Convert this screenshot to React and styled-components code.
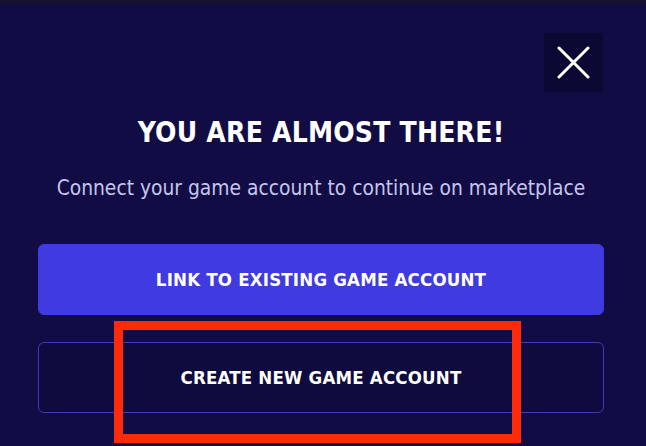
import React from 'react';
import styled, { createGlobalStyle } from 'styled-components';

const GlobalStyle = createGlobalStyle`
  html, body {
    margin: 0;
    padding: 0;
    background: #16112f;
  }
  body {
    font-family: "DejaVu Sans", "Liberation Sans", sans-serif;
    font-stretch: condensed;
  }
`;

const Modal = styled.div`
  position: relative;
  box-sizing: border-box;
  margin-top: 4px;
  height: 442px;
  padding: 29px 42px 0 38px;
  background: #110c44;
  display: flex;
  flex-direction: column;
`;

const TopBar = styled.div`
  display: flex;
  justify-content: flex-end;
  margin-right: 1px;
`;

const CloseButton = styled.button`
  width: 59px;
  height: 59px;
  padding: 0;
  border: none;
  background: #0b0833;
  display: flex;
  align-items: center;
  justify-content: center;
  cursor: pointer;
`;

const Title = styled.h1`
  margin: 24px 0 0;
  text-align: center;
  color: #ffffff;
  font-size: 28px;
  font-weight: 700;
  line-height: 34px;
  letter-spacing: 0.2px;
`;

const Subtitle = styled.p`
  margin: 25px 0 0;
  text-align: center;
  color: #c5c5ee;
  font-size: 20.8px;
  line-height: 26px;
  white-space: nowrap;
`;

const Actions = styled.div`
  display: flex;
  flex-direction: column;
  gap: 27px;
  margin-top: 43px;
`;

const ActionButton = styled.button`
  box-sizing: border-box;
  height: 71px;
  width: 100%;
  border-radius: 6px;
  border: 1.5px solid ${({ $primary }) => ($primary ? '#403ae1' : '#3f39c0')};
  background: ${({ $primary }) => ($primary ? '#403ae1' : '#0f0b3e')};
  color: #ffffff;
  font-family: inherit;
  font-stretch: condensed;
  font-size: 18.5px;
  font-weight: 600;
  letter-spacing: 0.2px;
  cursor: pointer;
`;

const Highlight = styled.div`
  position: absolute;
  left: 114px;
  top: 317px;
  width: 407px;
  height: 122px;
  box-sizing: border-box;
  border: 9px solid #ff2a0a;
  pointer-events: none;
`;

function CloseIcon() {
  return (
    <svg width="33" height="33" viewBox="0 0 33 33" fill="none">
      <path
        d="M2 2L31 31M31 2L2 31"
        stroke="#ffffff"
        strokeWidth="3"
        strokeLinecap="round"
      />
    </svg>
  );
}

export default function App() {
  return (
    <>
      <GlobalStyle />
      <Modal>
        <TopBar>
          <CloseButton aria-label="Close">
            <CloseIcon />
          </CloseButton>
        </TopBar>
        <Title>YOU ARE ALMOST THERE!</Title>
        <Subtitle>Connect your game account to continue on marketplace</Subtitle>
        <Actions>
          <ActionButton $primary>LINK TO EXISTING GAME ACCOUNT</ActionButton>
          <ActionButton>CREATE NEW GAME ACCOUNT</ActionButton>
        </Actions>
        <Highlight />
      </Modal>
    </>
  );
}
